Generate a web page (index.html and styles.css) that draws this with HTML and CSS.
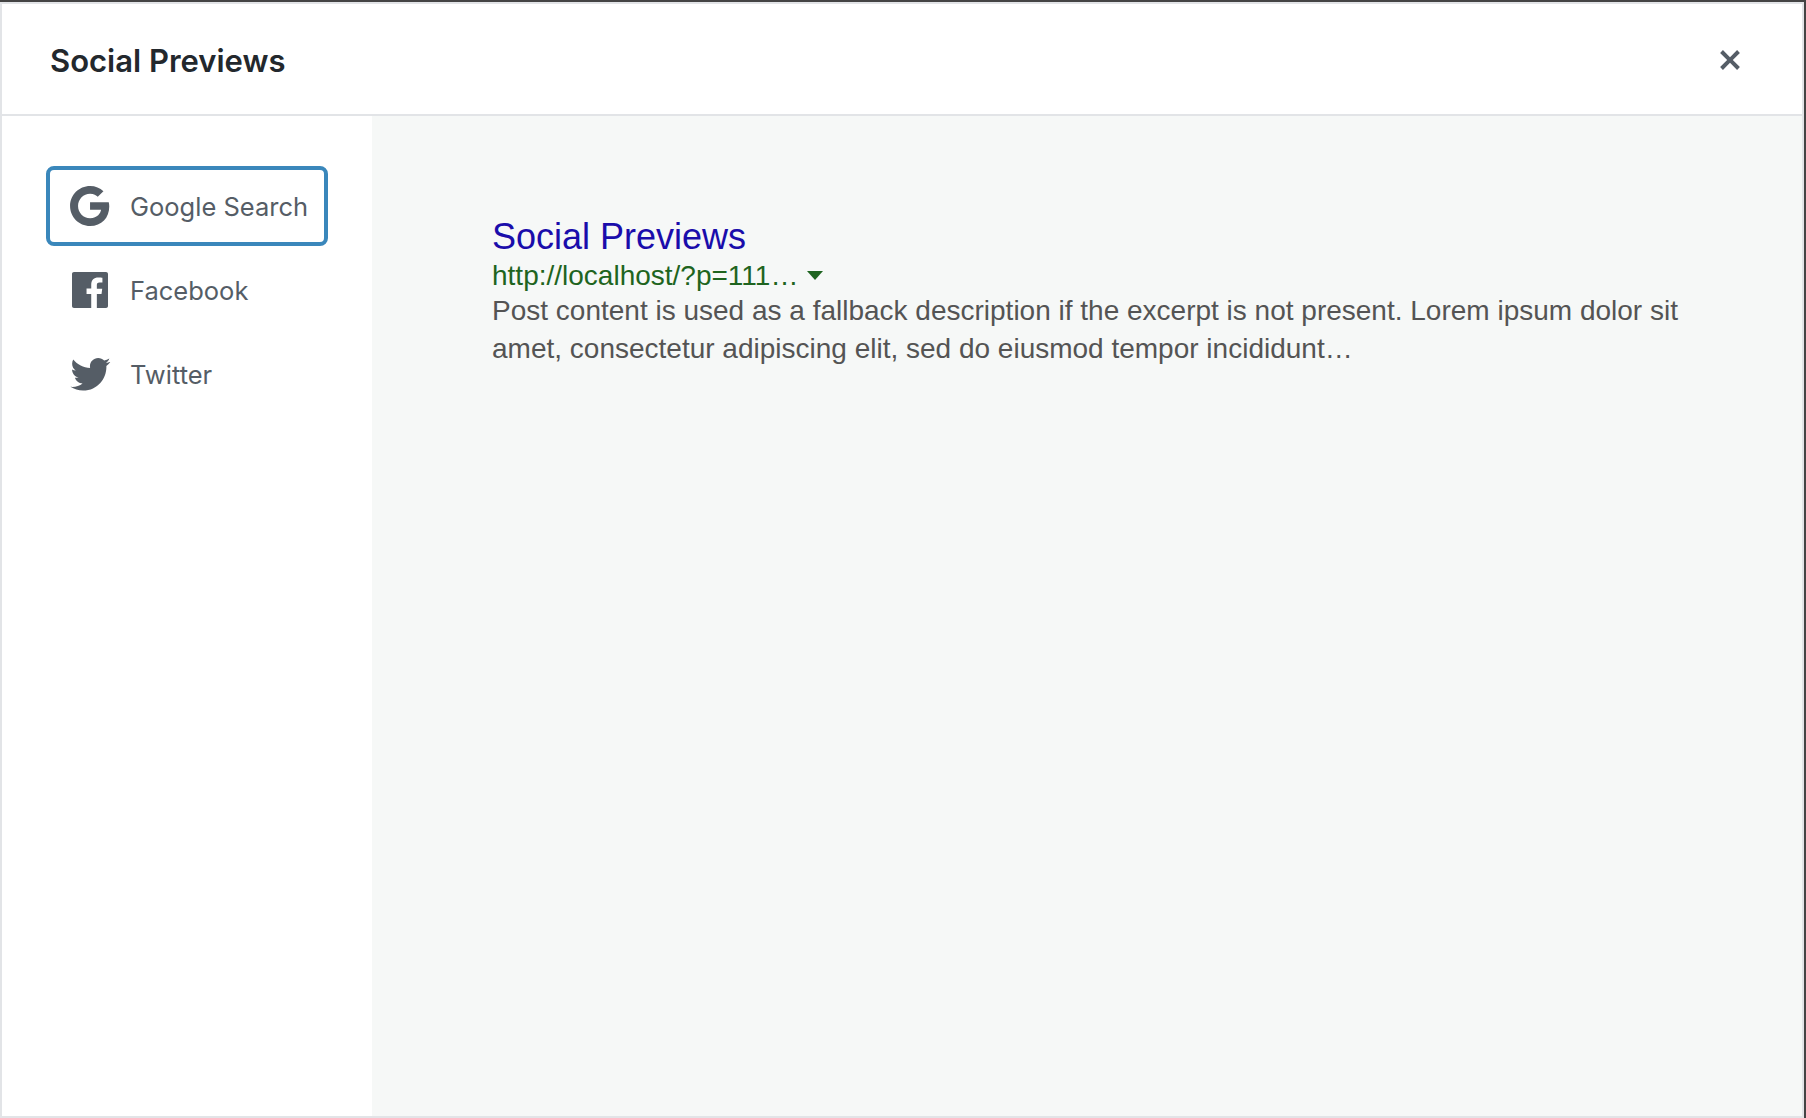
FILE: index.html
```html
<!DOCTYPE html>
<html lang="en">
<head>
<meta charset="utf-8">
<title>Social Previews</title>
<link rel="stylesheet" href="styles.css">
</head>
<body>
<div class="modal">
  <header class="modal-header">
    <h1 class="modal-title">Social Previews</h1>
    <button class="close" type="button" aria-label="Close">
      <svg class="close-icon" viewBox="0 0 20 20"><path d="M14.95 6.46L11.41 10l3.54 3.54-1.41 1.41L10 11.42l-3.53 3.53-1.42-1.42L8.58 10 5.05 6.47l1.42-1.42L10 8.58l3.54-3.53z"/></svg>
    </button>
  </header>
  <div class="modal-body">
    <nav class="tabs">
      <button class="tab tab-active" type="button">
        <svg class="tab-icon" viewBox="0 0 24 24"><path d="M12.02 10.18v3.73h5.51c-.26 1.57-1.67 4.22-5.5 4.22-3.31 0-6.01-2.75-6.01-6.12s2.7-6.12 6.01-6.12c1.87 0 3.13.8 3.85 1.48l2.84-2.76C16.99 2.99 14.73 2 12.03 2c-5.52 0-10 4.48-10 10s4.48 10 10 10c5.77 0 9.6-4.06 9.6-9.77 0-.83-.11-1.42-.25-2.05h-9.36z"/></svg>
        <span>Google Search</span>
      </button>
      <button class="tab" type="button">
        <svg class="tab-icon" viewBox="0 0 24 24"><path d="M20.007 3H3.993C3.445 3 3 3.445 3 3.993v16.013c0 .55.445.994.993.994h8.62v-6.97H10.27V11.31h2.346V9.31c0-2.325 1.42-3.59 3.494-3.59.993 0 1.847.073 2.096.106v2.43h-1.438c-1.128 0-1.346.537-1.346 1.324v1.734h2.69l-.35 2.717h-2.34V21h4.587c.548 0 .993-.445.993-.993V3.993c0-.548-.445-.993-.993-.993z"/></svg>
        <span>Facebook</span>
      </button>
      <button class="tab" type="button">
        <svg class="tab-icon" viewBox="0 0 24 24"><path d="M22.23 5.924c-.736.326-1.527.547-2.357.646.847-.508 1.498-1.312 1.804-2.27-.793.47-1.67.812-2.606 1-.75-.8-1.817-1.3-2.996-1.3-2.267 0-4.103 1.837-4.103 4.103 0 .32.036.633.106.934-3.41-.17-6.433-1.804-8.457-4.287-.353.607-.556 1.312-.556 2.064 0 1.424.724 2.68 1.825 3.415-.673-.022-1.305-.207-1.86-.514v.052c0 1.988 1.415 3.647 3.293 4.023-.344.095-.707.145-1.08.145-.265 0-.522-.026-.773-.074.522 1.63 2.038 2.817 3.833 2.85-1.404 1.1-3.174 1.757-5.096 1.757-.332 0-.66-.02-.98-.057 1.816 1.164 3.973 1.843 6.29 1.843 7.547 0 11.675-6.252 11.675-11.675 0-.178-.004-.355-.012-.53.802-.578 1.497-1.3 2.047-2.123z"/></svg>
        <span>Twitter</span>
      </button>
    </nav>
    <main class="preview">
      <article class="result">
        <a class="result-title" href="#">Social Previews</a>
        <div class="result-url"><span>http://localhost/?p=111…</span><i class="caret"></i></div>
        <p class="result-desc">Post content is used as a fallback description if the excerpt is not present. Lorem ipsum dolor sit amet, consectetur adipiscing elit, sed do eiusmod tempor incididunt…</p>
      </article>
    </main>
  </div>
</div>
</body>
</html>
```
FILE: styles.css
```css
* { box-sizing: border-box; }
html, body { margin: 0; height: 100%; }
body {
  background: #444;
  padding: 2px 2px 0 0;
  height: 1118px;
  overflow: hidden;
  font-family: Inter, "Noto Sans", sans-serif;
}
.modal {
  height: 100%;
  display: flex;
  flex-direction: column;
  background: #fff;
  border: 2px solid #e2e4e7;
}
.modal-header {
  flex: 0 0 112px;
  display: flex;
  align-items: center;
  justify-content: space-between;
  padding: 2px 52px 0 48px;
  border-bottom: 2px solid #e2e4e7;
}
.modal-title {
  margin: 0;
  font-size: 31px;
  font-weight: 600;
  color: #23282d;
}
.close {
  width: 40px;
  height: 40px;
  padding: 0;
  border: 0;
  background: none;
}
.close-icon { display: block; width: 40px; height: 40px; fill: #555d66; }
.modal-body { flex: 1; display: flex; min-height: 0; }
.tabs {
  flex: 0 0 370px;
  padding: 50px 44px 0;
  display: flex;
  flex-direction: column;
}
.tab {
  height: 80px;
  margin-bottom: 4px;
  padding: 0 0 0 16px;
  display: flex;
  align-items: center;
  gap: 16px;
  background: none;
  border: 4px solid transparent;
  border-radius: 8px;
  font-family: inherit;
  font-size: 25.5px;
  color: #555d66;
}
.tab-active { border-color: #3a87bb; }
.tab-icon { flex: none; width: 48px; height: 48px; fill: #555d66; }
.preview {
  flex: 1;
  background: #f6f8f7;
  padding: 98px 120px 0;
}
.result { font-family: "Liberation Sans", Arial, sans-serif; }
.result-title {
  display: block;
  font-size: 36px;
  line-height: 45px;
  color: #1a0dab;
  text-decoration: none;
}
.result-url {
  display: flex;
  align-items: center;
  font-size: 28px;
  line-height: 33px;
  color: #1e6420;
}
.caret {
  margin-left: 9px;
  border-top: 9px solid #1e6420;
  border-left: 8px solid transparent;
  border-right: 8px solid transparent;
}
.result-desc {
  margin: 0;
  font-size: 28px;
  line-height: 38px;
  color: #545454;
}
```
